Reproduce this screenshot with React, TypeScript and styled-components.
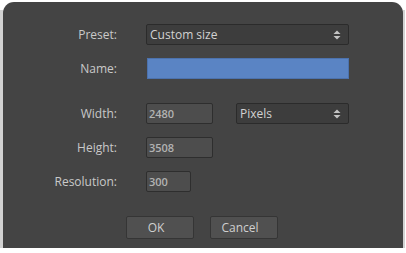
import styled, { createGlobalStyle } from "styled-components";

const GlobalStyle = createGlobalStyle`
  html, body {
    margin: 0;
    padding: 0;
    background: #ffffff;
  }
  body {
    font-family: "Open Sans", "Noto Sans", sans-serif;
  }
`;

function UpDownIcon() {
  return (
    <svg width="8" height="10" viewBox="0 0 8 10" aria-hidden="true">
      <path d="M4 0.5 L7.5 4 L0.5 4 Z" fill="#c4c4c4" />
      <path d="M4 9.5 L7.5 6 L0.5 6 Z" fill="#c4c4c4" />
    </svg>
  );
}

export default function App() {
  return (
    <>
      <GlobalStyle />
      <Frame>
        <Strip />
        <Panel>
          <Form>
            <Row>
              <Label>Preset:</Label>
              <Select $width={203}>
                <span>Custom size</span>
                <UpDownIcon />
              </Select>
            </Row>
            <Row>
              <Label>Name:</Label>
              <NameInput />
            </Row>
            <Row $spaced>
              <Label>Width:</Label>
              <NumberBox $width={67}>2480</NumberBox>
              <Select $width={113}>
                <span>Pixels</span>
                <UpDownIcon />
              </Select>
            </Row>
            <Row>
              <Label>Height:</Label>
              <NumberBox $width={67}>3508</NumberBox>
            </Row>
            <Row>
              <Label>Resolution:</Label>
              <NumberBox $width={45}>300</NumberBox>
            </Row>
          </Form>
          <Buttons>
            <Button type="button">OK</Button>
            <Button type="button">Cancel</Button>
          </Buttons>
        </Panel>
        <Strip />
      </Frame>
    </>
  );
}

const Frame = styled.div`
  display: grid;
  grid-template-columns: 3px 400px 2px;
  padding-top: 2px;
  width: 405px;
`;

const Strip = styled.div`
  margin-top: 8px;
  background: #d2d2d2;
`;

const Panel = styled.div`
  height: 246px;
  box-sizing: border-box;
  background: #444444;
  border-radius: 11px 11px 0 0;
  padding-top: 22px;
  display: flex;
  flex-direction: column;
`;

const Form = styled.div`
  display: flex;
  flex-direction: column;
  gap: 13px;
`;

const Row = styled.div<{ $spaced?: boolean }>`
  display: flex;
  align-items: center;
  gap: 23px;
  height: 21px;
  margin-top: ${({ $spaced }) => ($spaced ? "11px" : "0")};
`;

const Label = styled.div`
  width: 114px;
  margin-right: 6px;
  text-align: right;
  color: #c9c9c9;
  font-size: 12px;
  flex-shrink: 0;
`;

const Select = styled.div<{ $width: number }>`
  box-sizing: border-box;
  width: ${({ $width }) => $width}px;
  height: 21px;
  display: flex;
  align-items: center;
  justify-content: space-between;
  padding: 0 7px 0 3px;
  background: #3d3d3d;
  border: 1px solid #2b2b2b;
  border-radius: 2px;
  color: #d2d2d2;
  font-size: 12px;
`;

const NameInput = styled.div`
  box-sizing: border-box;
  width: 202px;
  height: 21px;
  margin-left: 1px;
  background: #5a84c4;
  border: 1px solid #4c72ad;
`;

const NumberBox = styled.div<{ $width: number }>`
  box-sizing: border-box;
  width: ${({ $width }) => $width}px;
  height: 21px;
  display: flex;
  align-items: center;
  padding-left: 2px;
  background: #4d4d4d;
  border: 1px solid #2e2e2e;
  border-radius: 2px;
  color: #b3b3b3;
  font-size: 11px;
  font-weight: 600;
`;

const Buttons = styled.div`
  display: flex;
  gap: 16px;
  padding-left: 123px;
  margin-top: 24px;
`;

const Button = styled.button`
  box-sizing: border-box;
  width: 68px;
  height: 23px;
  padding: 0 8px 0 0;
  background: #505050;
  border: 1px solid #353535;
  border-radius: 2px;
  color: #cfcfcf;
  font-family: "Open Sans", "Noto Sans", sans-serif;
  font-size: 12px;
  cursor: pointer;
`;
